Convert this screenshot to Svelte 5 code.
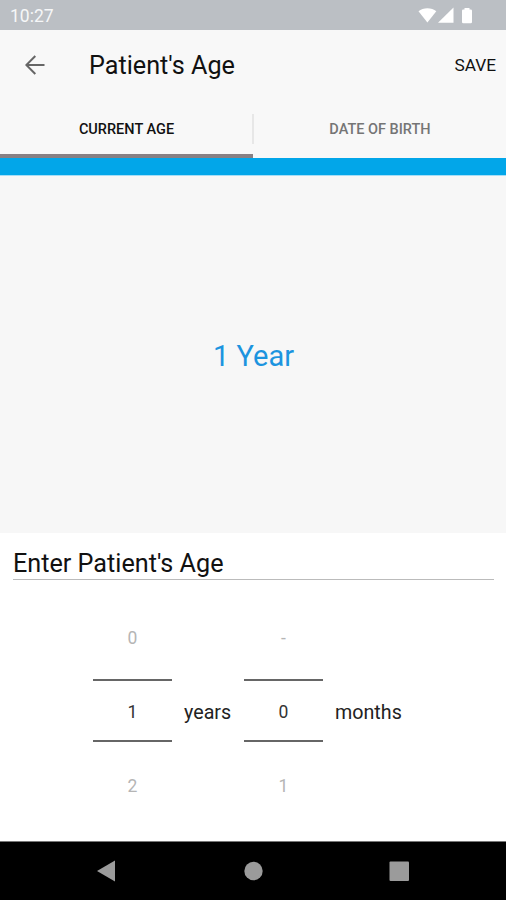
<script lang="ts">
  const tabs = [
    { id: 'age', label: 'Current Age' },
    { id: 'dob', label: 'Date of Birth' },
  ]

  const pickers = [
    { unit: 'years', prev: '0', value: '1', next: '2' },
    { unit: 'months', prev: '-', value: '0', next: '1' },
  ]

  let activeTab = $state('age')
</script>

<div class="screen">
  <div class="status-bar">
    <span class="clock">10:27</span>
    <svg class="status-icons" width="56" height="18" viewBox="0 0 56 18">
      <path d="M0.5 4.2C5 0.3 13.800 0.3 18.300 4.200L9.400 15.500Z" />
      <path d="M20 15.800L35.500 0.500V15.800Z" />
      <path d="M46.500 1h5v1.500h1.200q1.300 0 1.300 1.300v11.200q0 1.300-1.300 1.300h-7.400q-1.300 0-1.300-1.300v-11.200q0-1.300 1.300-1.300h1.200z" />
    </svg>
  </div>

  <header class="app-bar">
    <button class="back" aria-label="Back">
      <svg width="20" height="20" viewBox="0 0 20 20">
        <path d="M19.500 10H1.800M10.300 1L1.300 10L10.300 19" />
      </svg>
    </button>
    <h1>Patient's Age</h1>
    <button class="save">SAVE</button>
  </header>

  <nav class="tabs">
    {#each tabs as tab}
      <button class="tab" class:active={activeTab === tab.id} onclick={() => (activeTab = tab.id)}>
        <span>{tab.label}</span>
      </button>
    {/each}
  </nav>
  <div class="accent"></div>

  <section class="summary">1 Year</section>

  <section class="entry">
    <h2>Enter Patient's Age</h2>
    <div class="pickers">
      {#each pickers as picker}
        <div class="picker">
          <span class="faded">{picker.prev}</span>
          <span class="value">{picker.value}</span>
          <span class="faded">{picker.next}</span>
        </div>
        <span class="unit {picker.unit}">{picker.unit}</span>
      {/each}
    </div>
  </section>

  <footer class="nav-bar">
    <svg width="506" height="58" viewBox="0 0 506 58">
      <path d="M97 29L115 18.500V39.500Z" />
      <circle cx="253.500" cy="29" r="9.200" />
      <rect x="389.500" y="19.500" width="19.500" height="19.500" rx="1" />
    </svg>
  </footer>
</div>

<style>
  :global(body) { margin: 0; }

  .screen {
    display: flex;
    flex-direction: column;
    width: 506px;
    height: 900px;
    overflow: hidden;
    background: #fff;
    color: #111;
    font-family: Roboto, sans-serif;
  }
  button { border: 0; padding: 0; background: none; color: inherit; font: inherit; }

  /* Status bar */
  .status-bar {
    display: flex;
    align-items: center;
    justify-content: space-between;
    box-sizing: border-box;
    height: 30px;
    padding: 2px 32px 0 10px;
    background: #bbbfc4;
    color: #f6f7f8;
    font-size: 17.5px;
  }
  .status-icons { fill: #fff; margin-bottom: 1px; }

  /* App bar */
  .app-bar {
    display: flex;
    align-items: center;
    height: 70px;
    padding: 0 10px 0 25px;
    background: #f8f8f8;
  }
  .back { display: flex; width: 64px; }
  .back svg { fill: none; stroke: #666; stroke-width: 2; }
  h1 { flex: 1; margin: 0; padding-top: 1px; font-size: 25.2px; font-weight: 400; }
  .save { font-size: 17.3px; }

  /* Tabs */
  .tabs { display: flex; height: 58px; background: #f8f8f8; }
  .tab {
    flex: 1;
    box-sizing: border-box;
    border-bottom: 4px solid transparent;
    padding: 4px 0 0 1px;
    color: #757575;
    font-size: 14.5px;
    font-weight: 500;
    text-transform: uppercase;
  }
  .tab span { display: flex; align-items: center; justify-content: center; height: 30px; }
  .tab:first-child { padding-right: 0; }
  .tab:first-child span { margin-right: -1px; border-right: 2px solid #e7e7e7; }
  .tab.active { border-bottom-color: #888084; color: #111; }
  .accent { height: 17px; background: #02a6e9; border-bottom: 1px solid #a5def7; }

  .summary {
    display: flex;
    align-items: center;
    justify-content: center;
    box-sizing: border-box;
    height: 357px;
    padding: 2px 0 0 1px;
    background: #f7f7f7;
    color: #1c94df;
    font-size: 29px;
  }

  /* Age entry */
  .entry { flex: 1; padding: 15px 12px 0 13px; }
  h2 {
    margin: 0;
    border-bottom: 1px solid #bbb;
    font-size: 25.2px;
    font-weight: 400;
    line-height: 31px;
  }
  .pickers { display: flex; align-items: center; padding: 21px 0 0 80px; }
  .picker { display: flex; flex-direction: column; width: 79px; text-align: center; font-size: 17.5px; }
  .faded { height: 74px; line-height: 74px; color: #b5b5b5; }
  .value {
    box-sizing: border-box;
    height: 63px;
    margin: 4px 0 7px;
    border: solid #666;
    border-width: 2px 0;
    color: #333;
    line-height: 62px;
  }
  .unit { padding-left: 12px; font-size: 19.7px; color: #222; }
  .years { width: 60px; }

  /* System navigation */
  .nav-bar { height: 58px; border-top: 1px solid #777; background: #000; }
  .nav-bar svg { display: block; fill: #9b9b9b; }
</style>
